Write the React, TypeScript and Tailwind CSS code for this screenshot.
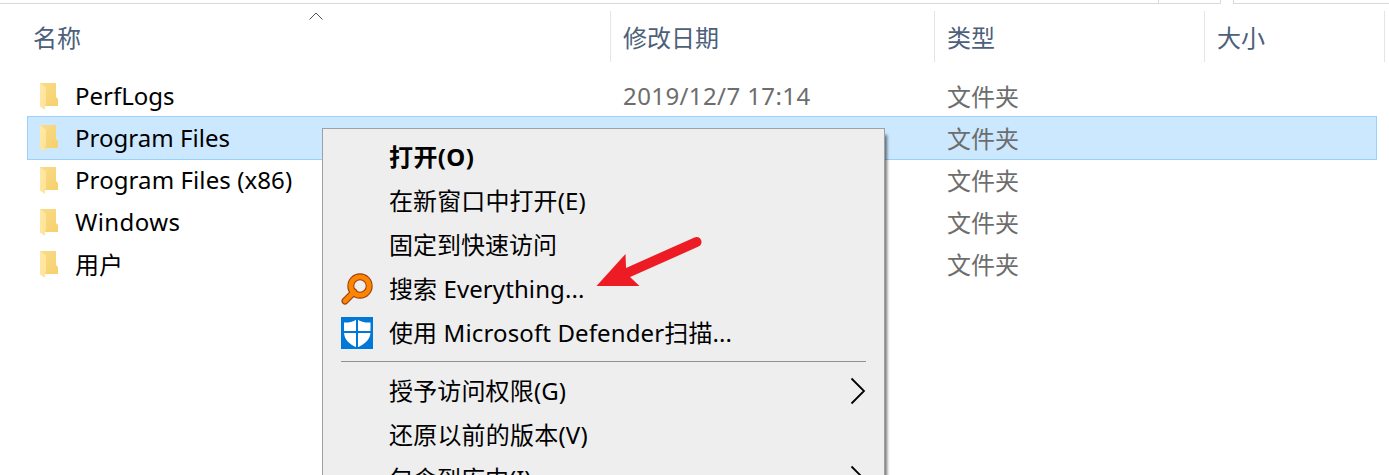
import type { ReactNode } from "react";

const files = [
  { name: "PerfLogs", nameClass: "", date: "2019/12/7 17:14", selected: false },
  { name: "Program Files", nameClass: "tracking-[0.03px]", date: "", selected: true },
  { name: "Program Files (x86)", nameClass: "tracking-[0.09px]", date: "", selected: false },
  { name: "Windows", nameClass: "tracking-[0.4px]", date: "", selected: false },
  { name: "用户", nameClass: "pt-px", date: "", selected: false },
];

function FolderIcon() {
  return (
    <svg width="20" height="28" viewBox="0 0 20 28" className="block shrink-0">
      <defs>
        <linearGradient id="folderBack" x1="0" y1="0" x2="1" y2="1">
          <stop offset="0" stopColor="#f9dc8a" />
          <stop offset="1" stopColor="#f6d06c" />
        </linearGradient>
        <linearGradient id="folderFront" x1="0" y1="0" x2="1" y2="1">
          <stop offset="0" stopColor="#ffe9a8" />
          <stop offset="1" stopColor="#ffe296" />
        </linearGradient>
      </defs>
      <path d="M1 0H17V14L19 16V23H1Z" fill="url(#folderBack)" />
      <path d="M1 0L7 4.500V21L6 22V27L1 23.500Z" fill="url(#folderFront)" />
    </svg>
  );
}

function EverythingIcon() {
  return (
    <svg width="32" height="32" viewBox="0 0 32 32" className="block">
      <path d="M4 28L13 19" stroke="#9a4210" strokeWidth="7" strokeLinecap="round" />
      <circle cx="19" cy="13" r="9.200" fill="none" stroke="#9a4210" strokeWidth="7" />
      <path d="M4 28L13 19" stroke="#ff8400" strokeWidth="4.600" strokeLinecap="round" />
      <circle cx="19" cy="13" r="9.200" fill="none" stroke="#ff8400" strokeWidth="4.800" />
    </svg>
  );
}

function DefenderIcon() {
  return (
    <svg width="32" height="32" viewBox="0 0 32 32" className="block">
      <path d="M0 0H32V32H0Z" fill="#0078d7" />
      <path d="M16 2C12.500 4.800 8 5.800 3 5.600V15C3 22 8 27.500 16 30.500C24 27.500 29.500 22 29.500 15V5.600C24 5.800 19.500 4.800 16 2Z" fill="#fff" />
      <path d="M16 1V31M2 15H30" stroke="#0078d7" strokeWidth="2" />
    </svg>
  );
}

function Chevron() {
  return (
    <svg width="16" height="28" viewBox="0 0 16 28" className="block" fill="none">
      <path d="M1.500 1.500L14 14L1.500 26.500" stroke="#000" strokeWidth="1.800" />
    </svg>
  );
}

function MenuItem({ children, icon, arrow, className = "" }: { children: ReactNode; icon?: ReactNode; arrow?: boolean; className?: string }) {
  return (
    <div className="flex h-11 items-center pr-[18px] pl-[18px]">
      <div className="w-12 shrink-0">{icon}</div>
      <span className={`grow whitespace-pre ${className}`}>{children}</span>
      {arrow && <Chevron />}
    </div>
  );
}

function ContextMenu() {
  return (
    <div className="absolute top-[128px] left-[322px] w-[563px] border border-[#a0a0a0] bg-[#eeeeee] pt-[6px] text-black shadow-[3px_6px_3px_-1px_#0000008c]">
      <MenuItem className="font-bold tracking-[0.4px]">打开(O)</MenuItem>
      <MenuItem className="tracking-[0.1px]">在新窗口中打开(E)</MenuItem>
      <MenuItem>固定到快速访问</MenuItem>
      <MenuItem icon={<EverythingIcon />} className="tracking-[0.09px]">搜索 Everything...</MenuItem>
      <MenuItem icon={<DefenderIcon />} className="tracking-[0.12px]">使用 Microsoft Defender扫描...</MenuItem>
      <div className="mt-[6px] mr-[18px] mb-[7px] ml-[18px] h-px bg-[#919191]" />
      <MenuItem arrow className="tracking-[0.15px]">授予访问权限(G)</MenuItem>
      <MenuItem className="tracking-[0.2px]">还原以前的版本(V)</MenuItem>
      <MenuItem arrow>包含到库中(I)</MenuItem>
      <svg width="106" height="50" viewBox="0 0 106 50" className="absolute top-[107px] left-[273px]">
        <path d="M100.500 6L22 41" stroke="#ed1c24" strokeWidth="10" strokeLinecap="round" />
        <path d="M0.500 50L29.500 18L30 31.500L34 41L43.500 50Z" fill="#ed1c24" />
      </svg>
    </div>
  );
}

export default function App() {
  return (
    <div className="relative h-[475px] w-[1389px] overflow-hidden bg-white font-['Noto_Sans','Noto_Sans_CJK_SC',sans-serif] text-[24px] leading-[32px]">
      <div className="flex h-1">
        <div className="w-[1159px] border-r border-b border-[#d9d9d9]" />
        <div className="w-[62px] border-r border-b border-[#d9d9d9]" />
        <div className="ml-3 grow border-b border-l border-[#d9d9d9]" />
      </div>
      <div className="mt-[7px] flex h-[51px] items-center text-[#4c607a]">
        <div className="flex h-full w-[611px] items-center border-r border-[#e5e5e5] pt-0.5 pl-[33px]">
          <span>名称</span>
          <svg width="14" height="8" viewBox="0 0 14 8" className="mb-[44px] ml-[228px]" fill="none">
            <path d="M.5 7.500L7 1L13.500 7.500" stroke="#505050" />
          </svg>
        </div>
        <div className="flex h-full w-[324px] items-center border-r border-[#e5e5e5] pt-0.5 pl-3">修改日期</div>
        <div className="flex h-full w-[270px] items-center border-r border-[#e5e5e5] pt-0.5 pl-3">类型</div>
        <div className="flex h-full w-[180px] items-center border-r border-[#e5e5e5] pt-0.5 pl-3">大小</div>
      </div>
      <div className="mt-[13px] ml-[27px] w-[1350px]">
        {files.map((file) => (
          <div
            key={file.name}
            className={file.selected ? "-my-px flex h-11 items-center border border-[#99d1ff] bg-[#cce8ff]" : "flex h-[42px] items-center border-x border-transparent"}
          >
            <div className="w-[47px] pt-0.5 pl-[11px]"><FolderIcon /></div>
            <span className={`w-[548px] text-black ${file.nameClass}`}>{file.name}</span>
            <span className="w-[324px] tracking-[0.4px] text-[#6d6d6d]">{file.date}</span>
            <span className="pt-0.5 text-[#6d6d6d]">文件夹</span>
          </div>
        ))}
      </div>
      <ContextMenu />
    </div>
  );
}
